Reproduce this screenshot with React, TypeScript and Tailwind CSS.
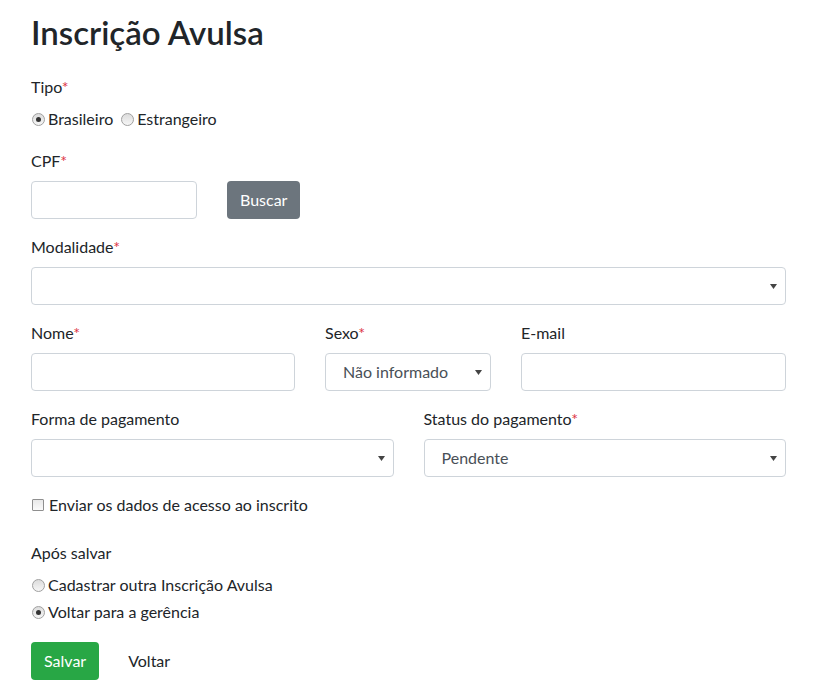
import React from "react";

const font = { fontFamily: 'Lato, "Open Sans", Arial, sans-serif' };

function Req() {
  return <span className="text-[#dc3545]">*</span>;
}

function Radio({ checked }: { checked?: boolean }) {
  return (
    <span className="relative inline-block w-[13px] h-[13px] rounded-full border border-[#a0a0a0] bg-gradient-to-b from-[#dcdcdc] to-[#f6f6f6] shrink-0">
      {checked && (
        <span className="absolute left-[3px] top-[3px] w-[5px] h-[5px] rounded-full bg-[#333]" />
      )}
    </span>
  );
}

function Checkbox() {
  return (
    <span className="inline-block w-[12px] h-[12px] border border-[#8f8f8f] rounded-[1px] bg-gradient-to-b from-[#e8e8e8] to-[#fafafa] shrink-0" />
  );
}

function Label({ children }: { children: React.ReactNode }) {
  return <div className="h-6 leading-6 mb-2">{children}</div>;
}

function Input() {
  return <div className="h-[38px] border border-[#ced4da] rounded-[4px] bg-white" />;
}

function Select({ value }: { value?: string }) {
  return (
    <div className="h-[38px] border border-[#ced4da] rounded-[4px] bg-white flex items-center pl-[17px] pr-[8px]">
      <span className="flex-1 text-[#495057]">{value ?? ""}</span>
      <svg width="7" height="5" viewBox="0 0 7 5" className="shrink-0">
        <path d="M0 0 H7 L3.5 5 Z" fill="#444" />
      </svg>
    </div>
  );
}

export default function App() {
  return (
    <div className="bg-white text-[#212529] text-[16px] leading-6 pl-[31px] pr-[27px] pt-[13px] pb-4" style={font}>
      <h2 className="text-[33px] leading-[38px] font-semibold mb-[24px] text-[#212529]">Inscrição Avulsa</h2>

      <Label>
        Tipo<Req />
      </Label>
      <div className="flex items-center h-6 mb-[18px]">
        <span className="flex items-center gap-[3px] ml-[1px]">
          <Radio checked />
          <span>Brasileiro</span>
        </span>
        <span className="flex items-center gap-[3px] ml-[8px]">
          <Radio />
          <span>Estrangeiro</span>
        </span>
      </div>

      <Label>
        CPF<Req />
      </Label>
      <div className="flex gap-[30px] mb-4">
        <div className="w-[166px]">
          <Input />
        </div>
        <button className="h-[38px] px-[13px] rounded-[4px] bg-[#6c757d] text-white">Buscar</button>
      </div>

      <Label>
        Modalidade<Req />
      </Label>
      <div className="mb-4">
        <Select />
      </div>

      <div className="grid grid-cols-[264px_166px_1fr] gap-x-[30px] mb-4">
        <div>
          <Label>
            Nome<Req />
          </Label>
          <Input />
        </div>
        <div>
          <Label>
            Sexo<Req />
          </Label>
          <Select value="Não informado" />
        </div>
        <div>
          <Label>E-mail</Label>
          <Input />
        </div>
      </div>

      <div className="grid grid-cols-2 gap-x-[30px] mb-4">
        <div>
          <Label>Forma de pagamento</Label>
          <Select />
        </div>
        <div>
          <Label>
            Status do pagamento<Req />
          </Label>
          <Select value="Pendente" />
        </div>
      </div>

      <div className="flex items-center gap-[5px] h-6 ml-[1px] mb-6">
        <Checkbox />
        <span>Enviar os dados de acesso ao inscrito</span>
      </div>

      <Label>Após salvar</Label>
      <div className="flex items-center gap-[3px] h-6 ml-[1px] mb-[3px]">
        <Radio />
        <span>Cadastrar outra Inscrição Avulsa</span>
      </div>
      <div className="flex items-center gap-[3px] h-6 ml-[1px] mb-[18px]">
        <Radio checked />
        <span>Voltar para a gerência</span>
      </div>

      <div className="flex items-center">
        <button className="h-[38px] px-[13px] rounded-[4px] bg-[#28a745] text-white">Salvar</button>
        <button className="h-[38px] px-3 ml-[17px] text-[#212529]">Voltar</button>
      </div>
    </div>
  );
}
